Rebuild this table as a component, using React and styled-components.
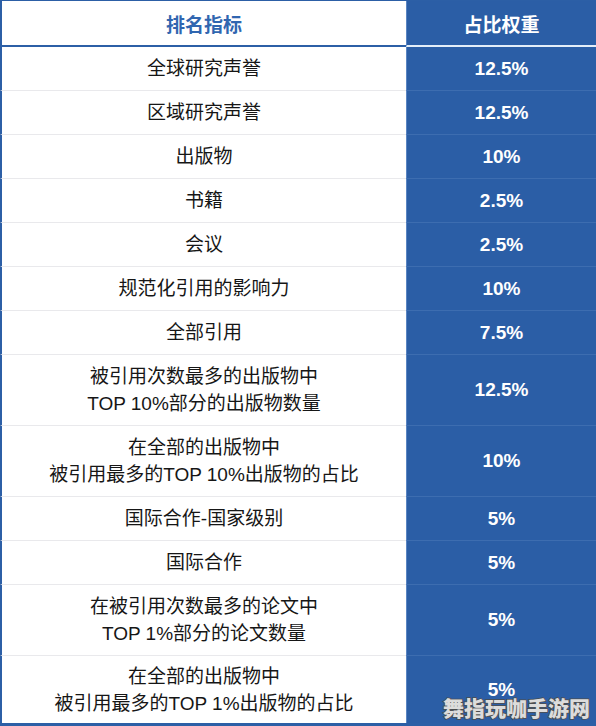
import React from 'react';
import styled, { createGlobalStyle } from 'styled-components';

const rows = [
    { name: ['全球研究声誉'], weight: '12.5%' },
    { name: ['区域研究声誉'], weight: '12.5%' },
    { name: ['出版物'], weight: '10%' },
    { name: ['书籍'], weight: '2.5%' },
    { name: ['会议'], weight: '2.5%' },
    { name: ['规范化引用的影响力'], weight: '10%' },
    { name: ['全部引用'], weight: '7.5%' },
    { name: ['被引用次数最多的出版物中', 'TOP 10%部分的出版物数量'], weight: '12.5%' },
    { name: ['在全部的出版物中', '被引用最多的TOP 10%出版物的占比'], weight: '10%' },
    { name: ['国际合作-国家级别'], weight: '5%' },
    { name: ['国际合作'], weight: '5%' },
    { name: ['在被引用次数最多的论文中', 'TOP 1%部分的论文数量'], weight: '5%' },
    { name: ['在全部的出版物中', '被引用最多的TOP 1%出版物的占比'], weight: '5%', last: true },
];

const App = () => {
    return (
        <>
            <GlobalStyle />
            <Table>
                <Row height={46}>
                    <NameHead>排名指标</NameHead>
                    <WeightHead>占比权重</WeightHead>
                </Row>
                {rows.map((r, i) => (
                    <Row key={i} height={r.last ? null : r.name.length > 1 ? 71 : 44}>
                        <NameCell last={r.last}>
                            {r.name.map((line, j) => <Line key={j}>{line}</Line>)}
                        </NameCell>
                        <WeightCell last={r.last}>{r.weight}</WeightCell>
                    </Row>
                ))}
                <Watermark>舞指玩咖手游网</Watermark>
            </Table>
        </>
    );
};

const GlobalStyle = createGlobalStyle`
body {
    margin: 0;
    background: #fff;
}
`;

const Table = styled.div`
position: relative;
width: 596px;
height: 726px;
box-sizing: border-box;
display: flex;
flex-direction: column;
border-top: 1px solid #2c5fa6;
border-bottom: 3px solid #2c5fa6;
font-family: "Liberation Sans", "Noto Sans CJK SC", sans-serif;
overflow: hidden;
`;

const Row = styled.div`
display: grid;
grid-template-columns: 406px 1fr;
height: ${p => (p.height ? `${p.height}px` : 'auto')};
flex: ${p => (p.height ? '0 0 auto' : '1 1 auto')};
`;

const NameHead = styled.div`
display: flex;
align-items: center;
justify-content: center;
box-sizing: border-box;
border-left: 2px solid #2c5fa6;
border-bottom: 2px solid #2c5fa6;
background: #fff;
color: #3066b0;
font-size: 19px;
font-weight: 700;
`;

const WeightHead = styled.div`
display: flex;
align-items: center;
justify-content: center;
box-sizing: border-box;
background: #2b5ea6;
border-left: 1px solid #5a85c2;
border-bottom: 2px solid #e4eef9;
color: #fff;
font-size: 19px;
font-weight: 700;
`;

const NameCell = styled.div`
display: flex;
flex-direction: column;
align-items: center;
justify-content: center;
box-sizing: border-box;
border-left: 2px solid #2c5fa6;
border-bottom: ${p => (p.last ? 'none' : '1px solid #e9e9ec')};
color: #161616;
font-size: 19px;
line-height: 27px;
`;

const Line = styled.span`
display: block;
white-space: nowrap;
`;

const WeightCell = styled.div`
display: flex;
align-items: center;
justify-content: center;
box-sizing: border-box;
background: #2b5ea6;
border-left: 1px solid #5a85c2;
border-bottom: ${p => (p.last ? 'none' : '1px solid #3d6db0')};
color: #fff;
font-size: 19px;
font-weight: 700;
`;

const Watermark = styled.div`
position: absolute;
right: 6px;
bottom: 1px;
font-family: "Noto Sans CJK SC", sans-serif;
font-size: 21px;
font-weight: 900;
letter-spacing: 0px;
color: #dcdcdc;
-webkit-text-stroke: 1.5px #4d4d4d;
paint-order: stroke fill;
`;

export default App;
